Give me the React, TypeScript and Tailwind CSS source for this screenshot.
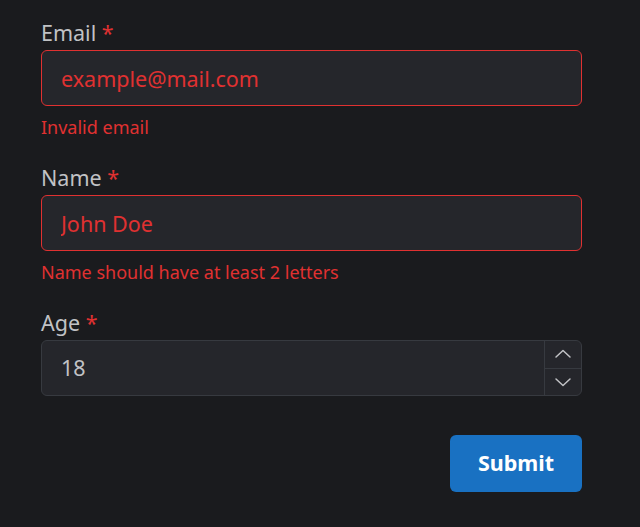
import { useState } from "react";

const font = { fontFamily: '"Noto Sans", "Open Sans", sans-serif' };

function Label({ children }: { children: React.ReactNode }) {
  return (
    <label className="block text-[21.5px] leading-[34px] text-[#c1c2c5]">
      {children} <span className="text-[#e03131]">*</span>
    </label>
  );
}

function Chevron({ up }: { up?: boolean }) {
  return (
    <svg width="18" height="18" viewBox="0 0 18 18" fill="none">
      <path
        d={up ? "M2 12L9 5.5L16 12" : "M2 6L9 12.5L16 6"}
        stroke="#c1c2c5"
        strokeWidth="1.5"
        strokeLinecap="round"
        strokeLinejoin="round"
      />
    </svg>
  );
}

export default function App() {
  const [email, setEmail] = useState("example@mail.com");
  const [name, setName] = useState("John Doe");
  const [age, setAge] = useState(18);

  return (
    <div className="min-h-screen bg-[#1a1b1e] pt-4" style={font}>
      <form className="ml-[41px] w-[541px]" onSubmit={(e) => e.preventDefault()}>
        <div>
          <Label>Email</Label>
          <input
            value={email}
            onChange={(e) => setEmail(e.target.value)}
            className="block h-[56px] w-full rounded-[6px] border-[1.5px] border-[#e03131] bg-[#25262b] px-[19px] text-[21.5px] text-[#e03131] outline-none"
          />
          <p className="mt-[10px] text-[18px] leading-[22px] text-[#e03131]">Invalid email</p>
        </div>

        <div className="mt-[23px]">
          <Label>Name</Label>
          <input
            value={name}
            onChange={(e) => setName(e.target.value)}
            className="block h-[56px] w-full rounded-[6px] border-[1.5px] border-[#e03131] bg-[#25262b] px-[19px] text-[21.5px] text-[#e03131] outline-none"
          />
          <p className="mt-[10px] text-[18px] leading-[22px] text-[#e03131]">
            Name should have at least 2 letters
          </p>
        </div>

        <div className="mt-[23px]">
          <Label>Age</Label>
          <div className="flex h-[56px] w-full overflow-hidden rounded-[6px] border-[1.5px] border-[#373a40] bg-[#25262b]">
            <input
              value={age}
              onChange={(e) => setAge(Number(e.target.value) || 0)}
              className="min-w-0 flex-1 bg-transparent px-[19px] text-[21.5px] text-[#c1c2c5] outline-none"
            />
            <div className="flex w-[37px] flex-col border-l border-[#373a40]">
              <button
                type="button"
                onClick={() => setAge(age + 1)}
                className="flex flex-1 items-center justify-center border-b border-[#373a40]"
              >
                <Chevron up />
              </button>
              <button
                type="button"
                onClick={() => setAge(Math.max(0, age - 1))}
                className="flex flex-1 items-center justify-center"
              >
                <Chevron />
              </button>
            </div>
          </div>
        </div>

        <div className="mt-[39px] flex justify-end">
          <button
            type="submit"
            className="h-[57px] w-[132px] rounded-[6px] bg-[#1971c2] text-[21.5px] font-bold text-white"
          >
            Submit
          </button>
        </div>
      </form>
    </div>
  );
}
